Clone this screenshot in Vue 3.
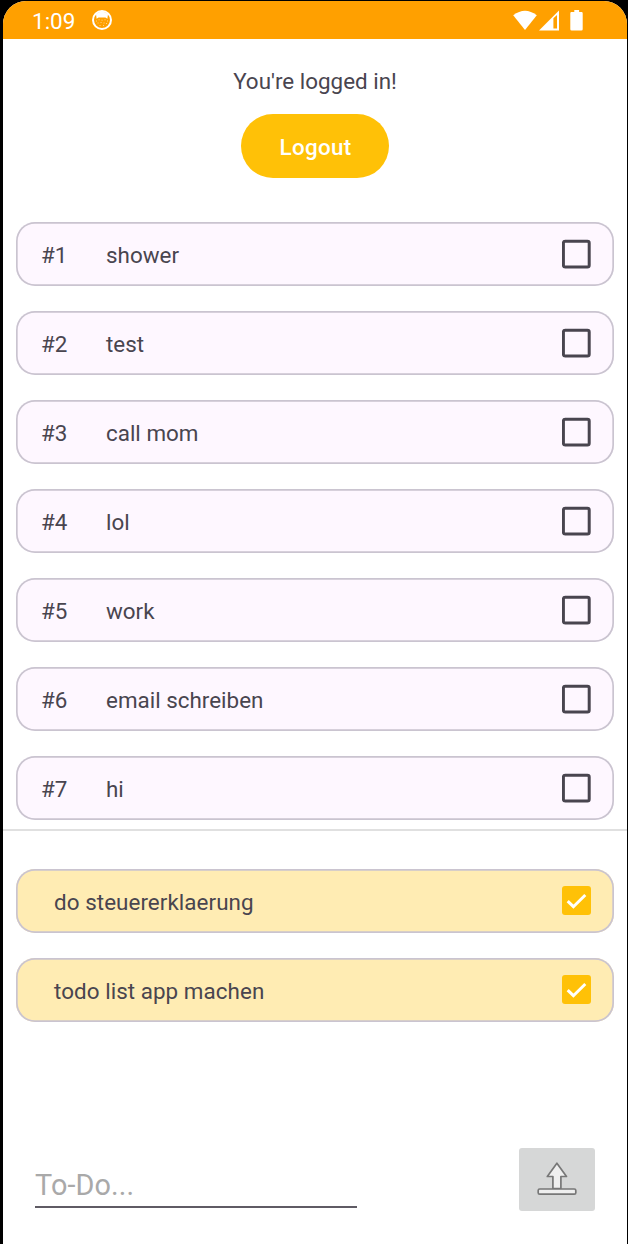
<script setup>
const open = ['shower', 'test', 'call mom', 'lol', 'work', 'email schreiben', 'hi']
const done = ['do steuererklaerung', 'todo list app machen']
</script>

<template>
  <div class="device">
    <div class="screen">
      <header class="status">
        <span class="clock">1:09</span>
        <svg class="face" width="20" height="20" viewBox="0 0 20 20">
          <circle cx="10" cy="10" r="9" fill="none" stroke="#fff" stroke-width="2" />
          <path d="M4 4Q10-1 16 4L15.400 8.700 13.400 7.500H6.600L4.600 8.700Z" fill="#fff" />
          <path d="M4.500 11h.1M7 9.800h.1M10 10.200h.1M13 9.800h.1M15.500 11h.1M6 13h.1M9 12.500h.1M12 13h.1M14.500 13.500h.1M8 15.500h.1M11.500 15.500h.1" stroke="#fff" stroke-width="1" stroke-linecap="round" opacity=".6" />
        </svg>
        <svg class="signals" width="72" height="22" viewBox="0 0 72 22" fill="#fff">
          <path d="M.2 5.200Q12-3.800 23.800 5.200L12 20Z" />
          <path fill-rule="evenodd" d="M46 .5V20.500H26ZM40.400 8.200V18.500H44V5Z" />
          <path d="M61.300 0h4.800v2h2.400q1.200 0 1.200 1.200v16q0 1.300-1.300 1.300h-9.800q-1.300 0-1.300-1.300v-16q0-1.200 1.200-1.200h2.800Z" />
        </svg>
      </header>

      <section class="account">
        <p class="greeting">You're logged in!</p>
        <button class="logout">Logout</button>
      </section>

      <ul class="list open">
        <li v-for="(t, i) in open" :key="t" class="card">
          <span class="num">#{{ i + 1 }}</span>
          <span class="label">{{ t }}</span>
          <svg class="box" width="29" height="30" viewBox="0 0 29 30">
            <rect x="1.400" y="2.300" width="25.800" height="25.800" rx="1.800" fill="none" stroke="#49454f" stroke-width="3" />
          </svg>
        </li>
      </ul>

      <ul class="list done">
        <li v-for="t in done" :key="t" class="card">
          <span class="label">{{ t }}</span>
          <svg class="box" width="29" height="29" viewBox="0 0 29 29">
            <rect width="29" height="29" rx="3" fill="#ffc107" />
            <path d="M5.700 15.200 11.400 20.700 23.300 9" fill="none" stroke="#fff" stroke-width="3" />
          </svg>
        </li>
      </ul>

      <footer class="composer">
        <input class="entry" placeholder="To-Do..." />
        <button class="send" aria-label="Add">
          <svg width="40" height="34" viewBox="0 0 40 34" fill="#efefef" stroke="#777" stroke-width="1.700" stroke-linejoin="round">
            <path d="M19.900 1.200 29.500 14.500H23.900V26.500H15.900V14.500H10.300Z" />
            <rect x="1.200" y="27" width="37.600" height="5.200" rx="1.500" />
          </svg>
        </button>
      </footer>
    </div>
  </div>
</template>

<style>
body {
  margin: 0;
  background: #000;
}
</style>

<style scoped>
.device {
  box-sizing: border-box;
  width: 628px;
  height: 1244px;
  padding: 1px 1px 0 3px;
  background: #000;
  font-family: Roboto, "Liberation Sans", sans-serif;
  font-size: 22.4px;
  letter-spacing: 0.01px;
  color: #49454f;
}
.screen {
  display: flex;
  flex-direction: column;
  height: 1243px;
  overflow: hidden;
  border-radius: 23px 23px 0 0;
  background: #fff;
}
.status {
  display: flex;
  align-items: center;
  flex: none;
  box-sizing: border-box;
  height: 38px;
  padding: 0 42px 0 29px;
  background: #ffa000;
  color: #fff;
}
.clock {
  width: 60px;
  font-size: 22.5px;
  letter-spacing: 0;
  padding-top: 2px;
}
.signals {
  margin: 2px 0 0 auto;
}
.account {
  display: flex;
  flex-direction: column;
  align-items: center;
  height: 183.3px;
  flex: none;
}
.greeting {
  margin: 29px 0 0;
  line-height: 26px;
}
.logout {
  width: 148px;
  height: 64px;
  margin-top: 20px;
  padding: 2px 0 0 1px;
  border: 0;
  border-radius: 32px;
  background: #ffc107;
  color: #fff;
  font: 500 22.400px Roboto, "Liberation Sans", sans-serif;
  letter-spacing: 0.3px;
}
.list {
  display: flex;
  flex-direction: column;
  gap: 25px;
  flex: none;
  margin: 0;
  padding: 0 13px;
  list-style: none;
}
.open {
  padding-bottom: 9px;
  border-bottom: 2px solid #e0e0e0;
}
.done {
  padding-top: 38px;
  letter-spacing: 0.06px;
}
.card {
  display: flex;
  align-items: center;
  box-sizing: border-box;
  height: 64px;
  padding: 0 23px 0 25px;
  border-radius: 19px;
  background: #fef7ff;
  box-shadow: inset 0 0 0 1.700px #cac4d0;
}
.done .card {
  padding-left: 38px;
  background: #ffecb3;
}
.num {
  width: 65px;
}
.num,
.label {
  padding-top: 1px;
}
.box {
  display: block;
  flex: none;
  margin: 0 0 1px auto;
}
.composer {
  display: flex;
  align-items: flex-end;
  justify-content: space-between;
  margin-top: auto;
  padding: 0 32px 33px;
}
.entry {
  box-sizing: border-box;
  width: 322px;
  height: 48px;
  margin-bottom: 3px;
  padding: 3px 0 0;
  border: 0;
  border-bottom: 2px solid #5f5b64;
  outline: 0;
  background: none;
  font: 28.800px Roboto, "Liberation Sans", sans-serif;
  letter-spacing: 0.1px;
}
.entry::placeholder {
  color: #a9a9a9;
  opacity: 1;
}
.send {
  display: flex;
  justify-content: center;
  width: 76px;
  height: 63px;
  padding: 14px 0 0;
  border: 0;
  border-radius: 3px;
  background: #d6d7d7;
}
</style>
